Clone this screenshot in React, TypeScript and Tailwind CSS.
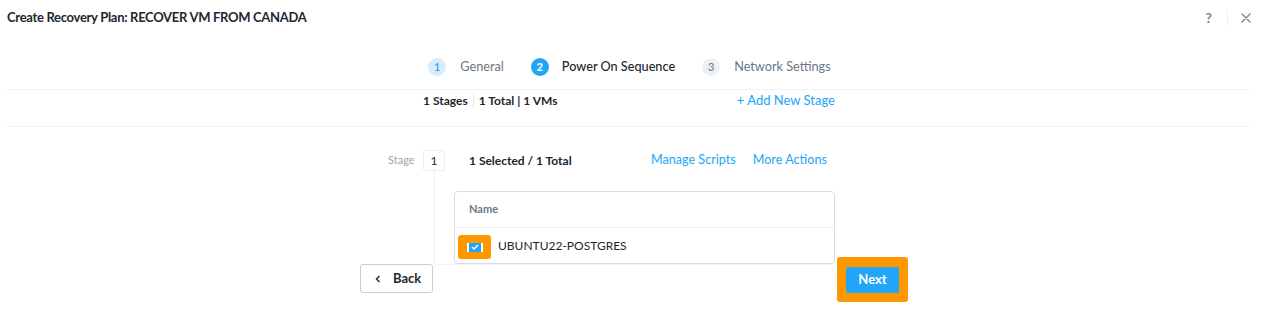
import React from 'react';

const font = { fontFamily: 'Lato, "Open Sans", sans-serif' };

const Step = ({ n, label, state }: { n: number; label: string; state: 'done' | 'active' | 'todo' }) => {
    const circle =
        state === 'active'
            ? 'bg-[#22a5f7] text-white font-bold'
            : state === 'done'
            ? 'bg-[#d6ebfb] text-[#1d8fdf]'
            : 'bg-[#eef1f4] text-[#6b7785]';
    const text = state === 'active' ? 'text-[#22272e] font-medium' : 'text-[#6b7785]';
    return (
        <div className="flex items-center">
            <div className={`w-[18px] h-[18px] rounded-full flex items-center justify-center text-[11px] ${circle}`}>{n}</div>
            <span className={`text-[12.7px] ${text} ${state === 'active' ? 'ml-[13px]' : 'ml-[14px]'}`}>{label}</span>
        </div>
    );
};

export default function App() {
    return (
        <div className="w-[1268px] h-[317px] bg-white overflow-hidden relative" style={font}>
            {/* header */}
            <div className="h-[35px] flex items-center justify-between pl-[7px] pr-[17px]">
                <span className="text-[13px] font-bold text-[#22272e] tracking-[-0.3px]">Create Recovery Plan: RECOVER VM FROM CANADA</span>
                <div className="flex items-center text-[#7a8794]">
                    <span className="text-[14px] leading-none font-bold">?</span>
                    <div className="w-px h-[15px] bg-[#eceef1] ml-[15px] mr-[13px]" />
                    <svg width="10" height="10" viewBox="0 0 10 10" stroke="#7a8794" strokeWidth="1.4" strokeLinecap="round">
                        <path d="M1 1L9 9M9 1L1 9" />
                    </svg>
                </div>
            </div>

            {/* steps */}
            <div className="h-[54px] pt-[10px] flex items-center justify-center ml-[360px] w-[539px]">
                <div className="flex items-center gap-[27px]">
                    <Step n={1} label="General" state="done" />
                    <Step n={2} label="Power On Sequence" state="active" />
                    <Step n={3} label="Network Settings" state="todo" />
                </div>
            </div>

            <div className="mx-[7px] mr-[17px] border-t border-[#f0f1f3]">
                {/* stats */}
                <div className="ml-[353px] w-[539px] pl-[63px] pr-[64px] h-[20px] pt-[1px] flex items-center justify-between">
                    <div className="flex items-center text-[12px] font-bold text-[#22272e]">
                        <span>1 Stages</span>
                        <div className="w-px h-[14px] bg-[#e6e8eb] mx-[5px]" />
                        <span>1 Total | 1 VMs</span>
                    </div>
                    <span className="text-[13px] text-[#22a5f7]">+ Add New Stage</span>
                </div>
                <div className="h-[17px] border-b border-[#f0f1f3]" />
            </div>

            {/* stage */}
            <div className="ml-[360px] w-[539px] pt-[23px]">
                <div className="h-[21px] flex items-center pl-[28px]">
                    <span className="text-[11px] text-[#9aa5b1] w-[35px]">Stage</span>
                    <div className="w-[22px] h-[21px] border border-[#eceef1] rounded-[2px] flex items-center justify-center text-[12px] text-[#22272e]">1</div>
                    <span className="ml-[24px] text-[12px] font-bold text-[#22272e] w-[182px]">1 Selected / 1 Total</span>
                    <span className="text-[12.6px] text-[#22a5f7]">Manage Scripts</span>
                    <span className="ml-[17px] text-[12.6px] text-[#22a5f7]">More Actions</span>
                </div>
                <div className="ml-[74px] w-[400px] border-l border-b border-[#f0f1f3] pt-[20px] pl-[19px]">
                    <div className="w-[381px] h-[73px] border border-[#d9dde2] rounded-[4px] relative">
                        <div className="h-[36px] border-b border-[#eceef1] flex items-center pl-[14px]">
                            <span className="text-[11px] font-bold text-[#6b7785]">Name</span>
                        </div>
                        <div className="h-[35px] flex items-center pl-[43px]">
                            <span className="text-[12px] text-[#22272e]">UBUNTU22-POSTGRES</span>
                        </div>
                        {/* highlighted checkbox */}
                        <div className="absolute left-[3px] top-[43px] w-[33px] h-[24px] bg-[#ff9800] rounded-[3px] flex items-center justify-center">
                            <div className="w-[16px] h-[9px] bg-[#22a5f7] border-x-[2px] border-white flex items-center justify-center">
                                <svg width="8" height="6" viewBox="0 0 8 6" fill="none" stroke="white" strokeWidth="1.4">
                                    <path d="M1 3L3 5L7 1" />
                                </svg>
                            </div>
                        </div>
                    </div>
                </div>

                {/* footer */}
                <div className="flex items-start justify-between -mt-px">
                    <button className="w-[73px] h-[29px] border border-[#c7cdd4] rounded-[3px] flex items-center pl-[14px] text-[13px] font-bold text-[#22272e]">
                        <svg width="6" height="8" viewBox="0 0 6 8" fill="none" stroke="#22272e" strokeWidth="1.4" className="mr-[12px]">
                            <path d="M4.5 1L1.5 4L4.5 7" />
                        </svg>
                        Back
                    </button>
                    <div className="relative mt-[2px]">
                        <div className="absolute -left-[9px] -top-[9px] w-[71px] h-[45px] bg-[#ff9800] rounded-[3px]" />
                        <button className="relative w-[53px] h-[26px] bg-[#22a5f7] rounded-[2px] text-[13px] font-bold text-white">Next</button>
                    </div>
                </div>
            </div>
        </div>
    );
}
